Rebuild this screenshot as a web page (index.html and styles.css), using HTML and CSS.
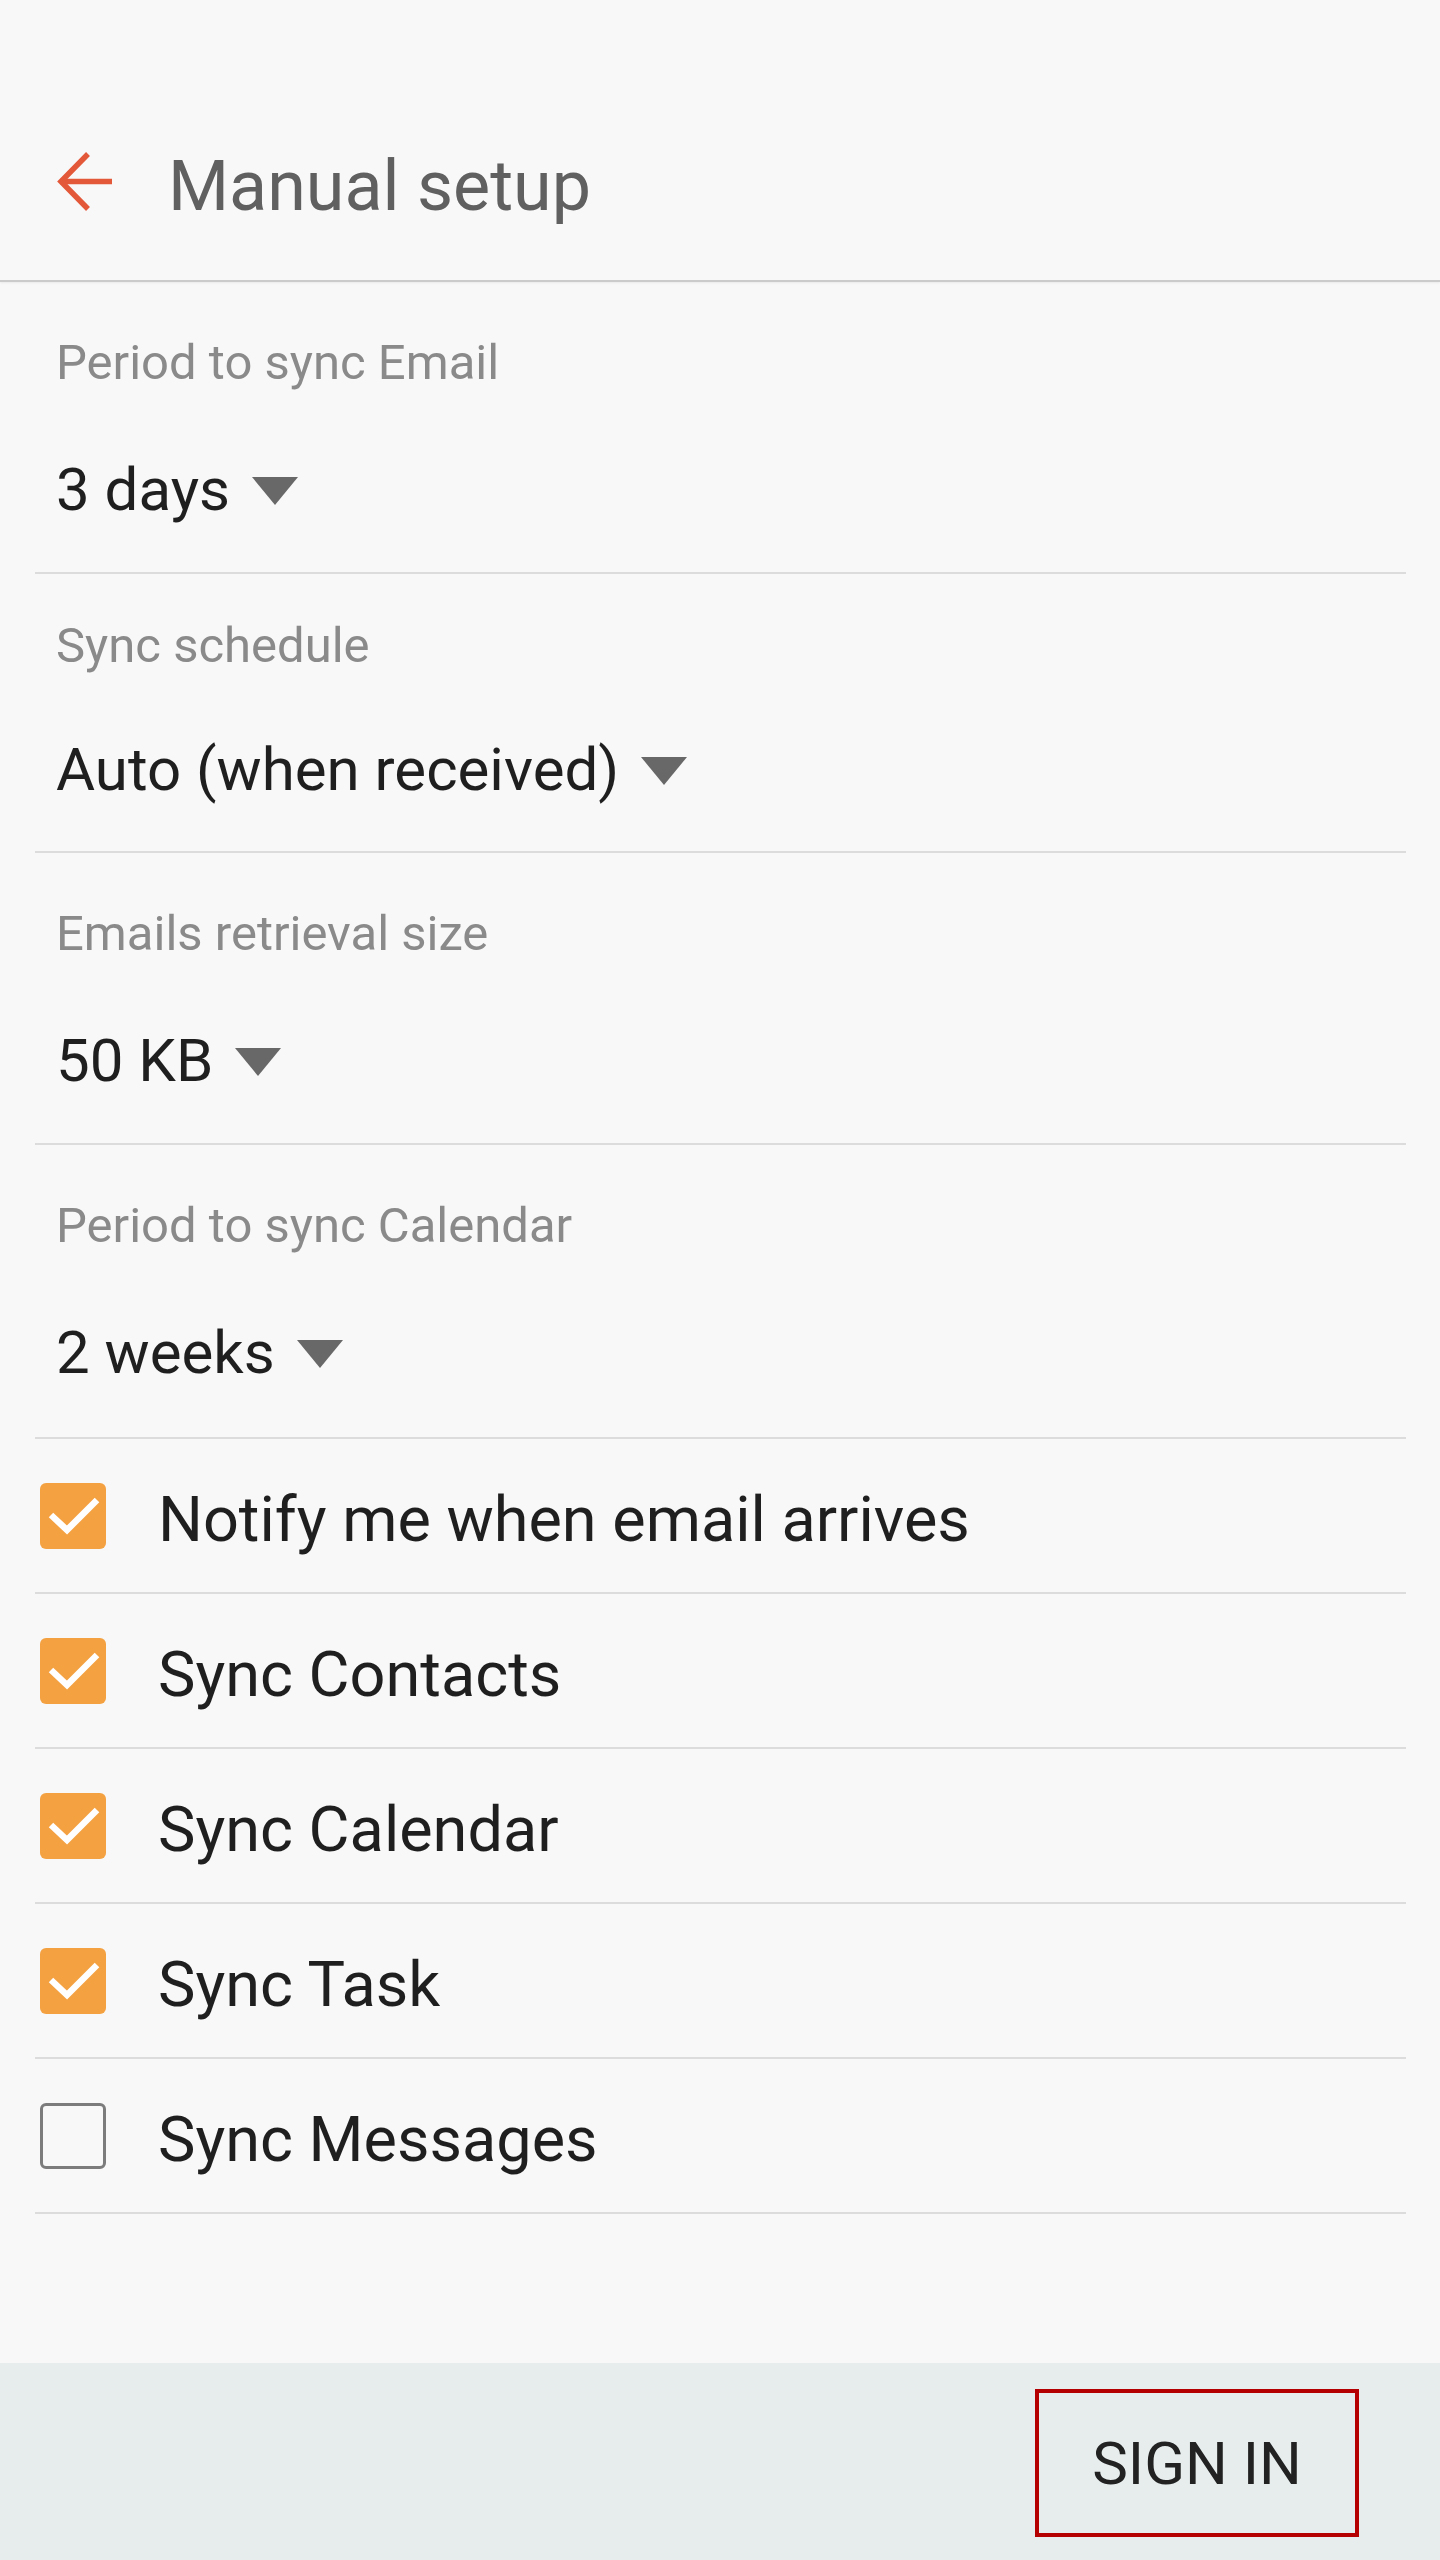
FILE: index.html
```html
<!DOCTYPE html>
<html lang="en">
<head>
<meta charset="utf-8">
<title>Manual setup</title>
<link rel="stylesheet" href="styles.css">
</head>
<body>
<div class="page">
  <header class="appbar">
    <svg class="back" viewBox="50 140 70 80" width="70" height="80" aria-hidden="true">
      <path d="M88 154 L61 181.5 L88 209" fill="none" stroke="#e4583a" stroke-width="5.5" stroke-linejoin="miter"/>
      <path d="M60 181.5 H112" fill="none" stroke="#e4583a" stroke-width="5.5"/>
    </svg>
    <h1 class="title">Manual setup</h1>
  </header>

  <main class="content">
    <section class="setting">
      <div class="setting-label">Period to sync Email</div>
      <div class="setting-value">3 days<span class="caret"></span></div>
    </section>
    <section class="setting setting-compact">
      <div class="setting-label">Sync schedule</div>
      <div class="setting-value">Auto (when received)<span class="caret"></span></div>
    </section>
    <section class="setting">
      <div class="setting-label">Emails retrieval size</div>
      <div class="setting-value">50 KB<span class="caret"></span></div>
    </section>
    <section class="setting setting-last">
      <div class="setting-label">Period to sync Calendar</div>
      <div class="setting-value">2 weeks<span class="caret"></span></div>
    </section>

    <div class="check-row">
      <span class="box checked"><svg viewBox="0 0 66 66" width="66" height="66"><path d="M11 32 L27 47 L57 17" fill="none" stroke="#fff" stroke-width="6.5"/></svg></span>
      <span class="check-text">Notify me when email arrives</span>
    </div>
    <div class="check-row">
      <span class="box checked"><svg viewBox="0 0 66 66" width="66" height="66"><path d="M11 32 L27 47 L57 17" fill="none" stroke="#fff" stroke-width="6.5"/></svg></span>
      <span class="check-text">Sync Contacts</span>
    </div>
    <div class="check-row">
      <span class="box checked"><svg viewBox="0 0 66 66" width="66" height="66"><path d="M11 32 L27 47 L57 17" fill="none" stroke="#fff" stroke-width="6.5"/></svg></span>
      <span class="check-text">Sync Calendar</span>
    </div>
    <div class="check-row">
      <span class="box checked"><svg viewBox="0 0 66 66" width="66" height="66"><path d="M11 32 L27 47 L57 17" fill="none" stroke="#fff" stroke-width="6.5"/></svg></span>
      <span class="check-text">Sync Task</span>
    </div>
    <div class="check-row">
      <span class="box"></span>
      <span class="check-text">Sync Messages</span>
    </div>
  </main>

  <footer class="bottombar">
    <button class="signin">SIGN IN</button>
  </footer>
</div>
</body>
</html>
```

FILE: styles.css
```css
* { box-sizing: border-box; }

html, body {
  margin: 0;
  padding: 0;
  background: #f8f8f8;
}

body {
  font-family: Roboto, "Noto Sans", "Liberation Sans", sans-serif;
}

.page {
  height: 2560px;
  display: flex;
  flex-direction: column;
  background: #f8f8f8;
}

.appbar {
  height: 282px;
  flex-shrink: 0;
  display: flex;
  align-items: flex-start;
  padding-left: 50px;
  border-bottom: 2px solid #cbcbcb;
  box-shadow: 0 1px 2px rgba(0, 0, 0, 0.06);
}

.back {
  display: block;
  margin-top: 140px;
}

.title {
  margin: 151px 0 0 48px;
  font-size: 70px;
  line-height: 70px;
  font-weight: 400;
  color: #606060;
}

.content {
  padding: 0 34px 0 35px;
}

.setting {
  padding: 52px 0 47px 21px;
  border-bottom: 2px solid #dcdcdc;
}

.setting-compact {
  padding-top: 43px;
  padding-bottom: 46px;
}

.setting-last {
  padding-bottom: 49px;
}

.setting-label {
  font-size: 49px;
  line-height: 58px;
  color: #8a8a8a;
}

.setting-value {
  margin-top: 63px;
  font-size: 60px;
  line-height: 70px;
  color: #1f1f1f;
  display: flex;
  align-items: center;
}

.setting-compact .setting-value {
  margin-top: 60px;
}

.caret {
  width: 0;
  height: 0;
  margin-left: 22px;
  margin-top: 2px;
  border-left: 23px solid transparent;
  border-right: 23px solid transparent;
  border-top: 28px solid #686868;
}

.check-row {
  height: 155px;
  display: flex;
  align-items: center;
  border-bottom: 2px solid #dcdcdc;
  padding-left: 5px;
}

.box {
  width: 66px;
  height: 66px;
  flex-shrink: 0;
  border-radius: 6px;
  border: 3px solid #7c7c7c;
  background: transparent;
  display: flex;
}

.box.checked {
  border: none;
  background: #f4a142;
}

.box svg {
  display: block;
}

.check-text {
  margin-left: 52px;
  padding-top: 8px;
  font-size: 63px;
  line-height: 74px;
  color: #1f1f1f;
}

.bottombar {
  margin-top: auto;
  height: 197px;
  flex-shrink: 0;
  background: #e7eded;
  display: flex;
  justify-content: flex-end;
  align-items: flex-start;
  padding: 26px 81px 0 0;
}

.signin {
  width: 324px;
  height: 148px;
  border: 4px solid #b40000;
  background: transparent;
  font-family: Roboto, "Noto Sans", "Liberation Sans", sans-serif;
  font-size: 60px;
  color: #222222;
  padding: 0;
  margin: 0;
}
```
